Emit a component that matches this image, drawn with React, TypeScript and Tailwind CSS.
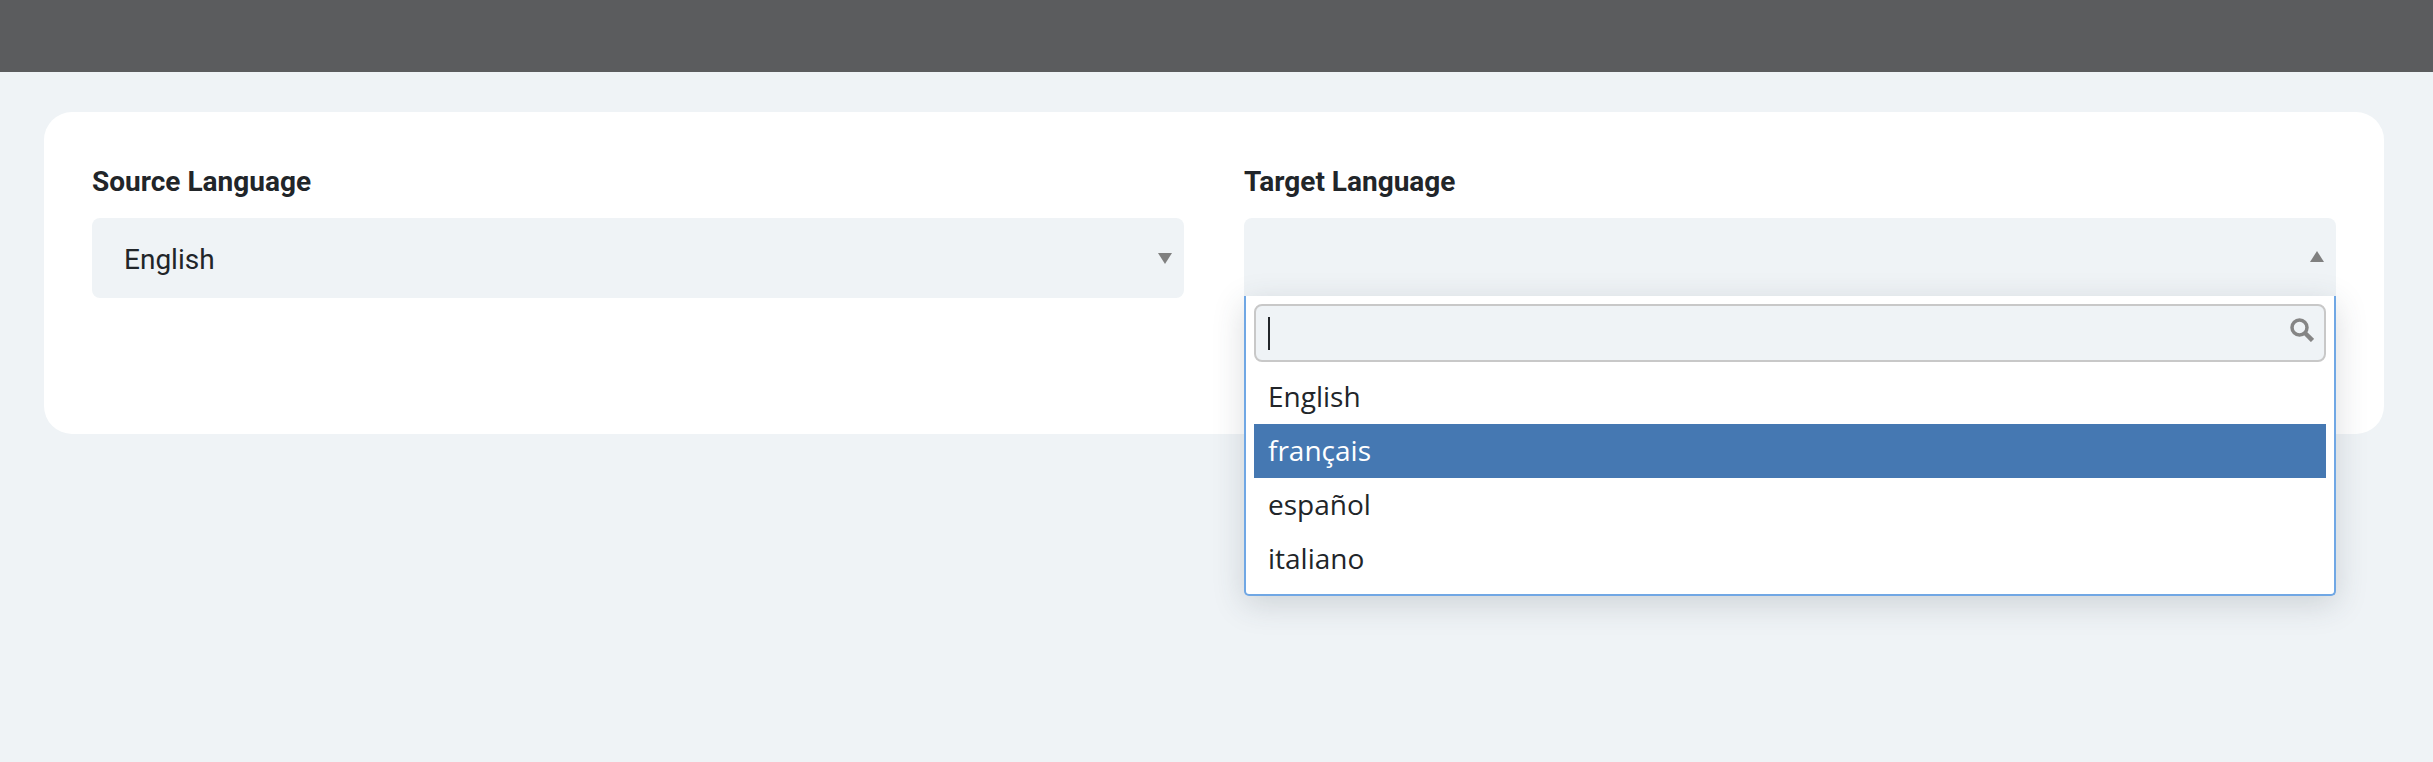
export default function App() {
  return (
    <div className="min-h-[762px] bg-[#eff3f6] font-['Roboto',sans-serif] text-[#212529]">
      <div className="h-[72px] bg-[#5b5c5e]" />
      <div className="pl-[44px] pr-[49px] pt-[40px]">
        <div className="h-[322px] rounded-[28px] bg-white px-[48px] pt-[48px]">
          <div className="flex gap-[60px]">
            <div className="flex-1">
              <div className="text-[28px] leading-[44px] font-bold">Source Language</div>
              <div className="relative mt-[14px] flex h-[80px] items-center rounded-[8px] bg-[#eff3f6] pl-[32px] pt-[4px] text-[28px]">
                English
                <svg className="absolute right-[12px] top-[35px]" width="14" height="11" viewBox="0 0 14 11">
                  <path d="M0 0H14L7 11Z" fill="#808080" />
                </svg>
              </div>
            </div>
            <div className="relative flex-1">
              <div className="text-[28px] leading-[44px] font-bold">Target Language</div>
              <div className="relative mt-[14px] h-[80px] rounded-t-[8px] bg-[#eff3f6]">
                <svg className="absolute right-[12px] top-[33px]" width="14" height="11" viewBox="0 0 14 11">
                  <path d="M0 11H14L7 0Z" fill="#808080" />
                </svg>
              </div>
              <div className="absolute left-0 right-0 top-[136px] z-10 h-[300px] rounded-b-[5px] border-x-2 border-b-2 border-[#70a7e4] bg-white px-[8px] pt-[8px] font-['Open_Sans',sans-serif] text-[28px] shadow-[0_8px_32px_rgba(50,60,70,0.18)]">
                <div className="relative flex h-[58px] items-center rounded-[8px] border-2 border-[#c8c8c8] bg-[#eff3f6] pl-[12px]">
                  <div className="h-[33px] w-[2px] bg-[#212529]" />
                  <svg className="absolute right-[10px] top-[12px]" width="24" height="24" viewBox="0 0 24 24">
                    <circle cx="9.5" cy="9.5" r="7.5" fill="none" stroke="#858585" strokeWidth="3.5" />
                    <path d="M14.5 14.5L22.5 22.5" stroke="#858585" strokeWidth="4.5" />
                  </svg>
                </div>
                <div className="mt-[8px]">
                  <div className="flex h-[54px] items-center pb-[2px] pl-[14px]">English</div>
                  <div className="flex h-[54px] items-center bg-[#4578b2] pb-[2px] pl-[14px] text-white">français</div>
                  <div className="flex h-[54px] items-center pb-[2px] pl-[14px]">español</div>
                  <div className="flex h-[54px] items-center pb-[2px] pl-[14px]">italiano</div>
                </div>
              </div>
            </div>
          </div>
        </div>
      </div>
    </div>
  );
}
